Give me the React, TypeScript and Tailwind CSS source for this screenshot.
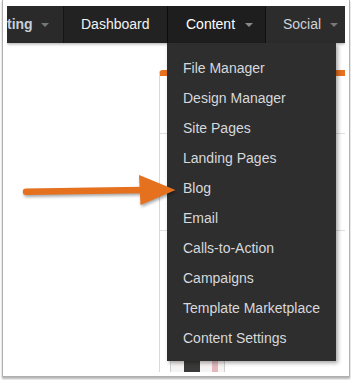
import { ReactNode } from 'react';

const menuItems = [
  'File Manager',
  'Design Manager',
  'Site Pages',
  'Landing Pages',
  'Blog',
  'Email',
  'Calls-to-Action',
  'Campaigns',
  'Template Marketplace',
  'Content Settings',
];

const Caret = ({ color = '#777' }: { color?: string }) => (
  <svg width="8" height="4" viewBox="0 0 8 4" className="shrink-0">
    <path d="M0 0 L8 0 L4 4 Z" fill={color} />
  </svg>
);

const NavItem = ({ className, children }: { className: string; children: ReactNode }) => (
  <div className={`flex h-full items-center shrink-0 ${className}`}>{children}</div>
);

const App = () => {
  return (
    <div className="relative w-[351px] h-[380px] bg-white overflow-hidden" style={{ fontFamily: '"Liberation Sans", Arial, sans-serif' }}>
      {/* screenshot frame */}
      <div className="ml-[2px] w-[348px] h-[377px] border-x border-b border-[#b0b0b0] px-[4px] pt-[6px] pb-[4px] shadow-[0_2px_2px_rgba(0,0,0,0.3)]">
        <div className="relative w-full h-full overflow-hidden bg-white">
          {/* top nav */}
          <div className="relative z-10 flex h-[37px] text-[14px] shadow-[0_1px_3px_rgba(0,0,0,0.35)]">
            <NavItem className="w-[56px] bg-[#2a2a2a] gap-[8px] text-[#c9ced6] font-bold">
              <span>ting</span>
              <Caret />
            </NavItem>
            <NavItem className="w-[104px] bg-[#222] border-l border-[#161616] pl-[17px] text-[#f2f2f2]">
              <span>Dashboard</span>
            </NavItem>
            <NavItem className="w-[98px] bg-[#1e1e1e] border-l border-[#0c0c0c] pl-[18px] gap-[10px] text-white">
              <span>Content</span>
              <Caret color="#8a8a8a" />
            </NavItem>
            <NavItem className="flex-1 bg-[#2c2c2c] border-l border-[#111] pl-[17px] gap-[9px] text-[#cfd3d8]">
              <span>Social</span>
              <Caret />
            </NavItem>
          </div>

          {/* page content behind the menu */}
          <div className="ml-[152px] mt-[27px] border-t-[6px] border-l border-t-[#e8711f] border-l-[#d9d9d9] rounded-tl-[4px]">
            <div className="h-[58px] border-b border-[#dedede]" />
            <div className="h-[97px] border-b border-[#dedede]" />
            <div className="pl-[10px] pt-[128px]">
              <div className="flex w-[55px] h-[14px] border-x border-[#d0d0d0] bg-[#f6f3f3]">
                <div className="w-[13px]" />
                <div className="w-[16px] bg-[#3a3a3a]" />
                <div className="w-[12px]" />
                <div className="w-[6px] bg-[#e3b9bf]" />
              </div>
            </div>
          </div>

          {/* Content dropdown */}
          <div className="absolute left-[160px] top-[37px] z-20 w-[169px] h-[318px] bg-[#2e2e2e] pt-[10px] shadow-[2px_2px_4px_rgba(0,0,0,0.35)]">
            {menuItems.map((item) => (
              <div key={item} className="flex h-[30px] items-center pl-[16px] text-[14px] text-[#d6d8dc]">
                {item}
              </div>
            ))}
          </div>
        </div>
      </div>

      {/* annotation arrow */}
      <svg
        className="absolute left-0 top-0 z-30 pointer-events-none"
        width="351"
        height="380"
        viewBox="0 0 351 380"
        style={{ filter: 'drop-shadow(1px 2px 1.5px rgba(0,0,0,0.35))' }}
      >
        <line x1="26" y1="191.8" x2="143" y2="190" stroke="#e5701e" strokeWidth="6.5" strokeLinecap="round" />
        <path d="M139 175 L140.5 205 L175.5 190 Z" fill="#e5701e" />
      </svg>
    </div>
  );
};

export default App;
